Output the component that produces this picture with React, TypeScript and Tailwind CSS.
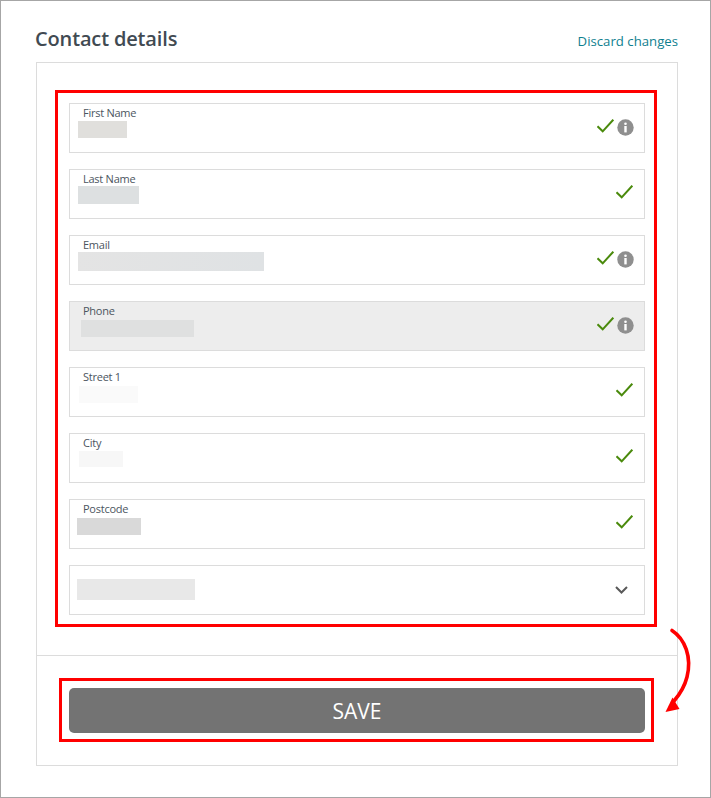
const font = "font-['Open_Sans','Noto_Sans',sans-serif]";

type Field = {
  label: string;
  blur: string;
  info?: boolean;
  disabled?: boolean;
};

const fields: Field[] = [
  { label: "First Name", blur: "ml-[8px] mt-[0px] h-[17px] w-[49px] bg-[#e0dfdc]", info: true },
  { label: "Last Name", blur: "ml-[8px] mt-[-1px] h-[18px] w-[61px] bg-[#dde0e1]" },
  { label: "Email", blur: "ml-[8px] mt-[-1px] h-[19px] w-[186px] bg-gradient-to-r from-[#e4e4e4] to-[#dfe2e4]", info: true },
  { label: "Phone", blur: "ml-[11px] mt-[1px] h-[17px] w-[113px] bg-[#dfe0e0]", info: true, disabled: true },
  { label: "Street 1", blur: "ml-[9px] mt-[1px] h-[17px] w-[59px] bg-[#fafafa]" },
  { label: "City", blur: "ml-[9px] mt-[0px] h-[16px] w-[44px] bg-[#f7f7f7]" },
  { label: "Postcode", blur: "ml-[7px] mt-[1px] h-[17px] w-[64px] bg-[#d9d9d9]" },
];

function Check() {
  return (
    <svg width="17" height="14" viewBox="0 0 17 14" fill="none">
      <path d="M0.5 7.3 L5.7 12.3 L16.3 0.7" stroke="#4a8a0c" strokeWidth="2" />
    </svg>
  );
}

function Info() {
  return (
    <svg width="17" height="17" viewBox="0 0 17 17">
      <circle cx="8.5" cy="8.5" r="8.2" fill="#8f8f8f" />
      <rect x="7.2" y="3.4" width="2.6" height="2.6" rx="1.3" fill="#fff" />
      <rect x="7.3" y="7" width="2.4" height="6.4" fill="#fff" />
    </svg>
  );
}

function FieldRow({ field }: { field: Field }) {
  return (
    <div
      className={`flex h-[50px] justify-between border border-[#dcdcdc] ${
        field.disabled ? "bg-[#ededed]" : "bg-white"
      }`}
    >
      <div>
        <div className="ml-[13px] mt-[1px] h-[16px] text-[11px] leading-[16px] tracking-[-0.25px] text-[#4b5560]">
          {field.label}
        </div>
        <div className={field.blur} />
      </div>
      <div className={`mt-[15px] flex h-[17px] items-start gap-[3px] ${field.info ? "mr-[10px]" : "mr-[11px]"}`}>
        <Check />
        {field.info && <Info />}
      </div>
    </div>
  );
}

export default function App() {
  return (
    <div className={`relative h-[798px] w-[711px] border border-[#a6a6a6] bg-white ${font}`}>
      <div className="ml-[34px] mr-[32px] flex h-[61px] items-start justify-between">
        <h1 className="mt-[23px] text-[20px] font-semibold leading-[30px] tracking-[-0.15px] text-[#414a52]">
          Contact details
        </h1>
        <a className="mt-[31px] text-[13.2px] leading-[18px] text-[#0f7f8f]">Discard changes</a>
      </div>

      <div className="ml-[35px] mr-[32px] h-[704px] border border-[#dcdcdc]">
        <div className="ml-[18px] mr-[20px] mt-[27px] flex h-[537px] w-[602px] flex-col gap-[16px] border-[3px] border-[#ff0000] pl-[11px] pr-[9px] pt-[10px]">
          {fields.map((field) => (
            <FieldRow key={field.label} field={field} />
          ))}
          <div className="flex h-[50px] items-center justify-between border border-[#dcdcdc] pl-[7px] pr-[16px]">
            <div className="mb-[2px] h-[21px] w-[118px] bg-[#e8e8e8]" />
            <svg width="13" height="8" viewBox="0 0 13 8" fill="none">
              <path d="M1 1 L6.5 6.5 L12 1" stroke="#595959" strokeWidth="2" />
            </svg>
          </div>
        </div>

        <div className="mt-[28px] h-px bg-[#dcdcdc]" />

        <div className="ml-[22px] mt-[22px] h-[64px] w-[595px] border-[3px] border-[#ff0000] pl-[7px] pt-[7px]">
          <button className="h-[45px] w-[576px] rounded-[5px] bg-[#737373] pt-[2px] text-[21px] leading-[43px] text-white">
            SAVE
          </button>
        </div>
      </div>

      {/* hand drawn arrow over the page */}
      <svg className="absolute left-[660px] top-[624px]" width="34" height="92" viewBox="0 0 34 92" fill="none">
        <path d="M11 5.5 C24 14 31 32 26 52 C23.5 62 19 69 13 76" stroke="#ff0000" strokeWidth="3.6" strokeLinecap="round" />
        <path d="M4.5 87 L11.5 72.5 L18.5 84 Z" fill="#ff0000" />
      </svg>
    </div>
  );
}
